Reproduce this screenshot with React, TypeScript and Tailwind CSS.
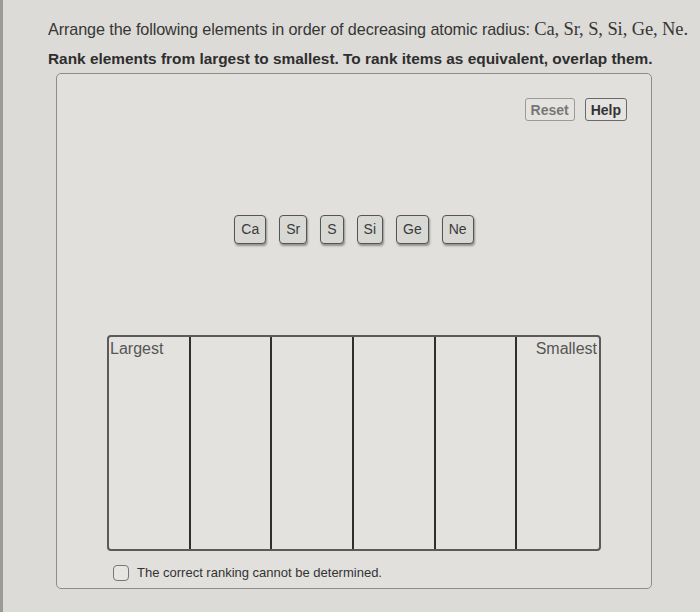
const ELEMENTS = ['Ca', 'Sr', 'S', 'Si', 'Ge', 'Ne']

const sans = { fontFamily: '"Liberation Sans", Arial, sans-serif' }

export default function App() {
  return (
    <div
      className="w-[700px] h-[612px] bg-[#dcdbd7] border-l-[3px] border-[#9a9a98] pl-[45px] pt-[19px] text-[#363636] overflow-hidden"
      style={sans}
    >
      <p className="text-[16.2px] leading-[20px] tracking-[-0.1px]">
        Arrange the following elements in order of decreasing atomic radius:{' '}
        <span className="text-[18.5px]" style={{ fontFamily: '"Liberation Serif", "Times New Roman", serif' }}>
          Ca, Sr, S, Si, Ge, Ne.
        </span>
      </p>
      <p className="mt-[10px] text-[15.4px] leading-[20px] font-bold text-[#2e2e2e]">
        Rank elements from largest to smallest. To rank items as equivalent, overlap them.
      </p>

      <div className="mt-[4px] ml-[8px] w-[596px] h-[516px] border border-[#8c8c8a] rounded-[5px] bg-[#e1e0dc] flex flex-col">
        {/* top buttons */}
        <div className="flex justify-end gap-[10px] pt-[24px] pr-[24px]">
          <button className="h-[23px] px-[5px] border border-[#9a9a98] rounded-[3px] bg-[#e4e3df] text-[14px] font-bold text-[#777] leading-none">
            Reset
          </button>
          <button className="h-[23px] px-[5px] border border-[#6a6a6a] rounded-[3px] bg-[#e4e3df] text-[14px] font-bold text-[#333] leading-none">
            Help
          </button>
        </div>

        {/* draggable tiles */}
        <div className="flex justify-center gap-[13px] mt-[94px]">
          {ELEMENTS.map(el => (
            <div
              key={el}
              className="h-[29px] px-[6px] flex items-center border-[1.5px] border-[#555] rounded-[4px] bg-[#d8d8d4] text-[14px] text-[#3a3a3a] shadow-[1px_2px_2px_rgba(0,0,0,0.35)]"
            >
              {el}
            </div>
          ))}
        </div>

        {/* ranking bins */}
        <div className="mt-[91px] ml-[50px] w-[494px] h-[216px] border-2 border-[#5a5a5a] rounded-[4px] grid grid-cols-6 bg-[#e3e2de]">
          {[0, 1, 2, 3, 4, 5].map(i => (
            <div
              key={i}
              className={`h-full ${i < 5 ? 'border-r-2 border-[#2f2f2f]' : ''} ${i === 5 ? 'text-right pr-[2px]' : 'pl-[1px]'}`}
            >
              {i === 0 && <span className="text-[16px] leading-[20px] text-[#555]">Largest</span>}
              {i === 5 && <span className="text-[16px] leading-[20px] text-[#555]">Smallest</span>}
            </div>
          ))}
        </div>

        {/* checkbox */}
        <label className="flex items-center gap-[8px] mt-[12px] ml-[56px]">
          <span className="w-[16px] h-[16px] border-[1.5px] border-[#777] rounded-[4px] bg-[#e6e5e1]" />
          <span className="text-[13px] text-[#333]">The correct ranking cannot be determined.</span>
        </label>
      </div>
    </div>
  )
}
